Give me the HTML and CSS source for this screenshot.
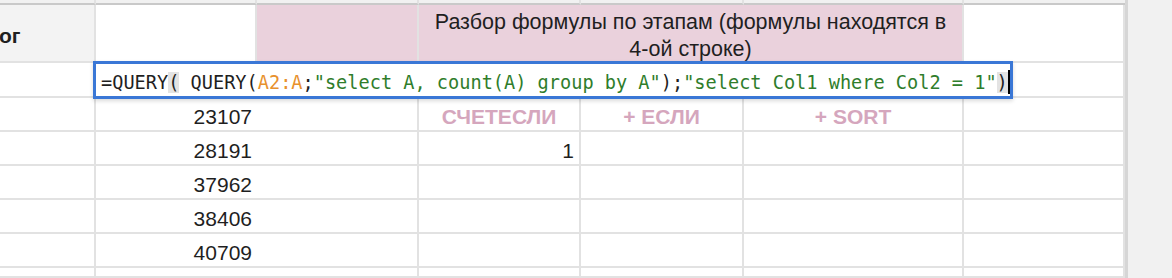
FILE: index.html
```html
<!DOCTYPE html>
<html lang="ru">
<head>
  <meta charset="UTF-8">
  <meta name="viewport" content="width=device-width, initial-scale=1.0">
  <title>Разбор формулы</title>
  <link rel="stylesheet" href="styles.css">
</head>
<body>
  <div class="sheet">
    <div class="grid">
      <!-- freeze strip -->
      <div class="cell top"></div>
      <div class="cell top"></div>
      <div class="cell top"></div>
      <div class="cell top"></div>
      <div class="cell top"></div>
      <div class="cell top"></div>
      <div class="cell top"></div>

      <!-- header row -->
      <div class="cell head-a">ог</div>
      <div class="cell"></div>
      <div class="cell pink"></div>
      <div class="cell pink merged"><p>Разбор формулы по этапам (формулы находятся в <span class="nobr">4-ой</span> строке)</p></div>
      <div class="cell"></div>

      <!-- row with formula -->
      <div class="cell"></div>
      <div class="cell"></div>
      <div class="cell"></div>
      <div class="cell"></div>
      <div class="cell"></div>
      <div class="cell"></div>
      <div class="cell"></div>

      <!-- labels -->
      <div class="cell"></div>
      <div class="cell num">23107</div>
      <div class="cell"></div>
      <div class="cell label">СЧЕТЕСЛИ</div>
      <div class="cell label">+ ЕСЛИ</div>
      <div class="cell label">+ SORT</div>
      <div class="cell"></div>

      <div class="cell"></div>
      <div class="cell num">28191</div>
      <div class="cell"></div>
      <div class="cell num">1</div>
      <div class="cell"></div>
      <div class="cell"></div>
      <div class="cell"></div>

      <div class="cell"></div>
      <div class="cell num">37962</div>
      <div class="cell"></div>
      <div class="cell"></div>
      <div class="cell"></div>
      <div class="cell"></div>
      <div class="cell"></div>

      <div class="cell"></div>
      <div class="cell num">38406</div>
      <div class="cell"></div>
      <div class="cell"></div>
      <div class="cell"></div>
      <div class="cell"></div>
      <div class="cell"></div>

      <div class="cell"></div>
      <div class="cell num">40709</div>
      <div class="cell"></div>
      <div class="cell"></div>
      <div class="cell"></div>
      <div class="cell"></div>
      <div class="cell"></div>

      <div class="cell"></div>
      <div class="cell"></div>
      <div class="cell"></div>
      <div class="cell"></div>
      <div class="cell"></div>
      <div class="cell"></div>
      <div class="cell"></div>

      <!-- formula editor over the cell -->
      <div class="editor"><span>=QUERY</span><span class="match">(</span><span> QUERY(</span><span class="range">A2:A</span><span>;</span><span class="str">"select A, count(A) group by A"</span><span>);</span><span class="str">"select Col1 where Col2 = 1"</span><span class="match">)</span><span class="caret"></span></div>
    </div>
    <div class="outside"></div>
  </div>
</body>
</html>
```

FILE: styles.css
```css
body {
  margin: 0;
  background: #fff;
  font-family: 'Liberation Sans', Arial, sans-serif;
  color: #1f1f1f;
  overflow: hidden;
}
.sheet {
  display: flex;
  height: 278px;
  overflow: hidden;
}
.grid {
  position: relative;
  display: grid;
  grid-template-columns: 96px 161px 162px 162px 163px 220px 161px;
  grid-template-rows: 5px 58px 35px 34px 34px 34px 34px 34px 10px;
  flex: none;
}
.outside {
  flex: 1;
  background: #f1f1f1;
  border-left: 3px solid #d6d6d6;
}
.cell {
  box-sizing: border-box;
  border-right: 2px solid #e2e2e2;
  border-bottom: 2px solid #e2e2e2;
  display: flex;
  align-items: center;
  padding: 6px 5px 0;
  font-size: 21px;
  white-space: nowrap;
  overflow: hidden;
}
.cell:nth-child(7n) {
  border-right: none;
}
.top {
  padding: 0;
  background: #f1f1f1;
  border-bottom: 2px solid #c9c9c9;
}
.head-a {
  background: #f3f3f3;
  font-weight: bold;
  padding-left: 0;
  margin-left: -1px;
}
.pink {
  background: #ead1dc;
}
.merged {
  grid-column: span 3;
  justify-content: center;
  padding: 6px 8px 0;
}
.merged p {
  margin: 0;
  white-space: normal;
  text-align: center;
  font-size: 21.5px;
  line-height: 27px;
}
.nobr {
  white-space: nowrap;
}
.num {
  justify-content: flex-end;
}
.label {
  justify-content: center;
  font-weight: bold;
  color: #d5a6bd;
}
.editor {
  position: absolute;
  left: 93px;
  top: 61px;
  width: 920px;
  height: 38px;
  box-sizing: border-box;
  border: 3px solid #3a77d6;
  background: #fff;
  padding: 6px 0 0 5px;
  font-family: 'DejaVu Sans Mono', monospace;
  font-size: 18.6px;
  line-height: 26px;
  white-space: pre;
  color: #1f1f1f;
  box-shadow: 0 2px 4px rgba(0, 0, 0, 0.15);
}
.range {
  color: #e8912d;
}
.str {
  color: #2f7d2b;
}
.match {
  background: #e3e3e3;
}
.caret {
  display: inline-block;
  width: 2px;
  height: 24px;
  background: #000;
  vertical-align: -5px;
}
```
